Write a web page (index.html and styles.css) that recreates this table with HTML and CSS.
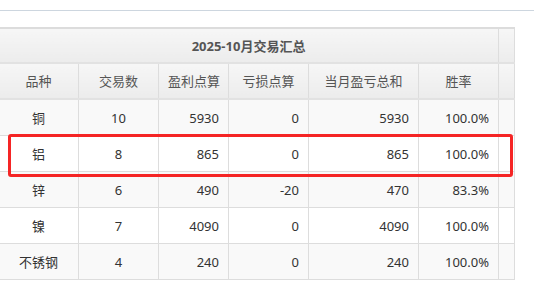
FILE: index.html
```
<!DOCTYPE html>
<html lang="zh">
<head>
<meta charset="utf-8">
<link rel="stylesheet" href="styles.css">
</head>
<body>
<div class="topbar"></div>
<div class="wrap">
  <table class="report">
    <colgroup>
      <col class="c1"><col class="c2"><col class="c3"><col class="c4"><col class="c5"><col class="c6"><col class="c7">
    </colgroup>
    <thead>
      <tr class="title-row"><th colspan="6">2025-10月交易汇总</th><th></th></tr>
      <tr class="head-row"><th>品种</th><th>交易数</th><th>盈利点算</th><th>亏损点算</th><th>当月盈亏总和</th><th>胜率</th><th></th></tr>
    </thead>
    <tbody>
      <tr class="odd"><td class="ctr">铜</td><td class="ctr">10</td><td>5930</td><td>0</td><td>5930</td><td>100.0%</td><td></td></tr>
      <tr class="even"><td class="ctr">铝</td><td class="ctr">8</td><td>865</td><td>0</td><td>865</td><td>100.0%</td><td></td></tr>
      <tr class="odd"><td class="ctr">锌</td><td class="ctr">6</td><td>490</td><td>-20</td><td>470</td><td>83.3%</td><td></td></tr>
      <tr class="even"><td class="ctr">镍</td><td class="ctr">7</td><td>4090</td><td>0</td><td>4090</td><td>100.0%</td><td></td></tr>
      <tr class="odd"><td class="ctr">不锈钢</td><td class="ctr">4</td><td>240</td><td>0</td><td>240</td><td>100.0%</td><td></td></tr>
    </tbody>
  </table>
  <div class="highlight"></div>
</div>
</body>
</html>
```
FILE: styles.css
```
html, body {
  margin: 0;
  padding: 0;
  background: #fff;
  overflow: hidden;
}
body {
  font-family: "Noto Sans", "Noto Sans CJK SC", sans-serif;
  font-size: 13px;
  color: #333;
}
.topbar {
  height: 10px;
  border-bottom: 1px solid #cdd6df;
}
.wrap {
  position: relative;
  margin-top: 16px;
}
.report {
  border-collapse: collapse;
  table-layout: fixed;
  width: 516px;
  margin-left: -2px;
}
.c1 { width: 80px; }
.c2 { width: 80px; }
.c3 { width: 70px; }
.c4 { width: 80px; }
.c5 { width: 110px; }
.c6 { width: 80px; }
.c7 { width: 16px; }
.report th, .report td {
  border: 1px solid #dddddd;
  padding: 0 9px;
  white-space: nowrap;
  line-height: 16px;
}
.report th {
  background: linear-gradient(#f6f6f6, #ececec);
  color: #555;
  font-weight: normal;
  text-align: center;
}
.title-row th {
  height: 33px;
  font-weight: bold;
  font-size: 13px;
  color: #555;
  border-top: 2px solid #dcdcdc;
  border-bottom: 2px solid #e2e2e2;
}
.head-row th {
  height: 34px;
  border-bottom: 2px solid #e2e2e2;
}
.report td {
  height: 35px;
  text-align: right;
}
.report td.ctr {
  text-align: center;
}
.odd td { background: #f9f9f9; }
.even td { background: #ffffff; }
.highlight {
  position: absolute;
  left: 8px;
  top: 107px;
  width: 499px;
  height: 37px;
  border: 3px solid #f52525;
  border-radius: 3px;
}
```
